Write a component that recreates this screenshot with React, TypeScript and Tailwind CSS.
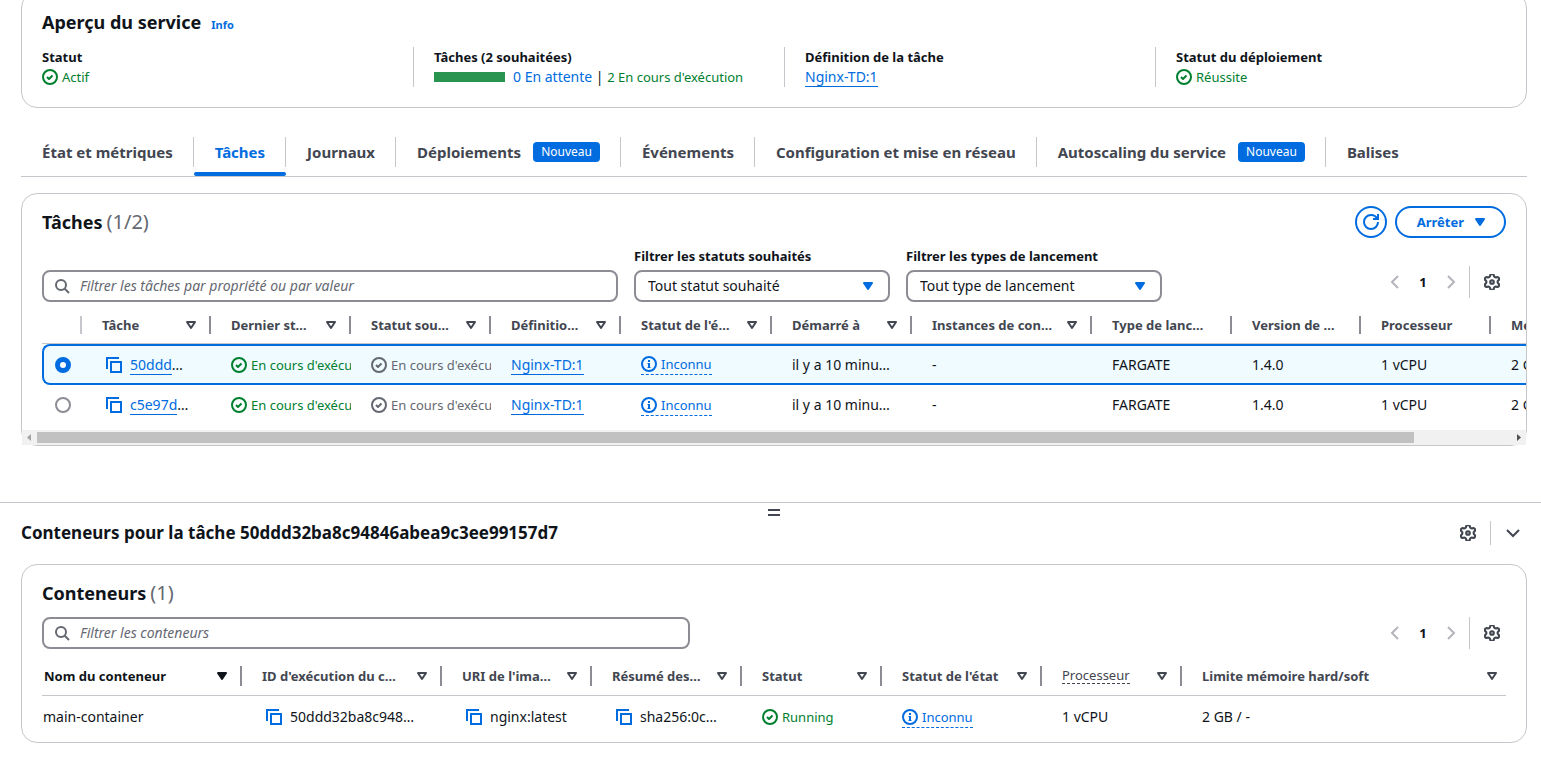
import { useState, type ReactNode } from "react";

type IconProps = { className?: string };

function CheckIcon({ className = "" }: IconProps) {
  return (
    <svg viewBox="0 0 16 16" className={`size-4 shrink-0 ${className}`} fill="none" stroke="currentColor" strokeWidth="2" aria-hidden="true">
      <circle cx="8" cy="8" r="7" />
      <path d="m5 8 2 2 3.521-3.521" strokeLinejoin="round" />
    </svg>
  );
}

function InfoIcon() {
  return (
    <svg viewBox="0 0 16 16" className="size-4 shrink-0" fill="none" stroke="currentColor" strokeWidth="2" aria-hidden="true">
      <circle cx="8" cy="8" r="7" />
      <path d="M8 12V7" />
      <path d="M6.5 7.5H8M6.5 11.500h3" strokeWidth="1" />
      <path d="M8 6V4" />
    </svg>
  );
}

function CopyIcon() {
  return (
    <svg viewBox="0 0 16 16" className="size-4 shrink-0" fill="none" stroke="currentColor" strokeWidth="2" aria-hidden="true">
      <path d="M15 5H5v10h10V5Z" />
      <path d="M13 1H1v11" />
    </svg>
  );
}

function SearchIcon() {
  return (
    <svg viewBox="0 0 16 16" className="size-4 shrink-0 text-[#656871]" fill="none" stroke="currentColor" strokeWidth="2" aria-hidden="true">
      <circle cx="7" cy="7" r="5" />
      <path d="m15 15-4.500-4.500" />
    </svg>
  );
}

function GearIcon() {
  return (
    <svg viewBox="2 2 20 20" className="size-4 shrink-0" fill="none" stroke="currentColor" strokeWidth="2.7" strokeLinejoin="round" aria-hidden="true">
      <path d="M9.671 4.136a2.34 2.34 0 0 1 4.659 0 2.34 2.34 0 0 0 3.319 1.915 2.34 2.34 0 0 1 2.33 4.033 2.34 2.34 0 0 0 0 3.831 2.34 2.34 0 0 1-2.33 4.033 2.34 2.34 0 0 0-3.319 1.915 2.34 2.34 0 0 1-4.659 0 2.34 2.34 0 0 0-3.32-1.915 2.34 2.34 0 0 1-2.33-4.033 2.34 2.34 0 0 0 0-3.831A2.34 2.34 0 0 1 6.35 6.051a2.34 2.34 0 0 0 3.319-1.915" />
      <circle cx="12" cy="12" r="2.2" />
    </svg>
  );
}

function RefreshIcon() {
  return (
    <svg viewBox="0 0 16 16" className="size-4 shrink-0" fill="none" stroke="currentColor" strokeWidth="2" aria-hidden="true">
      <path d="M10 5h5V0" />
      <path d="M15 8a6.957 6.957 0 0 1-7 7 6.957 6.957 0 0 1-7-7 6.957 6.957 0 0 1 7-7 6.87 6.87 0 0 1 6.3 4" />
    </svg>
  );
}

function Chevron({ d }: { d: string }) {
  return (
    <svg viewBox="0 0 16 16" className="size-4 shrink-0" fill="none" stroke="currentColor" strokeWidth="2" aria-hidden="true">
      <path d={d} />
    </svg>
  );
}

function Caret({ filled = false, className = "" }: { filled?: boolean; className?: string }) {
  return (
    <svg viewBox="0 0 16 16" className={`size-4 shrink-0 ${className}`} stroke="currentColor" strokeWidth="2" strokeLinejoin="round" fill={filled ? "currentColor" : "none"} aria-hidden="true">
      <path d="M4 5h8l-4 6-4-6Z" />
    </svg>
  );
}

function Info() {
  return (
    <span className="flex w-fit items-center gap-1 border-b border-dashed border-[#006ce0] text-[13px] text-[#006ce0]">
      <InfoIcon />
      Inconnu
    </span>
  );
}

function Link({ children }: { children: ReactNode }) {
  return (
    <a href="#" className="border-b border-[#006ce0] text-[#006ce0]">
      {children}
    </a>
  );
}

function Status({ color, children }: { color: string; children: ReactNode }) {
  return (
    <span className={`flex items-center gap-1 text-[13px] ${color}`}>
      <CheckIcon />
      {children}
    </span>
  );
}

const tabs = [
  { label: "État et métriques" },
  { label: "Tâches" },
  { label: "Journaux" },
  { label: "Déploiements", badge: true },
  { label: "Événements" },
  { label: "Configuration et mise en réseau" },
  { label: "Autoscaling du service", badge: true },
  { label: "Balises" },
];

function Pagination() {
  return (
    <div className="flex h-8 items-center">
      <nav aria-label="Pagination" className="flex items-center gap-3 pr-2.5">
        <button type="button" disabled aria-label="Page précédente" className="text-[#b4b4bb]">
          <Chevron d="M11 2 5 8l6 6" />
        </button>
        <button type="button" className="w-4 font-bold">
          1
        </button>
        <button type="button" disabled aria-label="Page suivante" className="text-[#b4b4bb]">
          <Chevron d="m5 2 6 6-6 6" />
        </button>
      </nav>
      <div className="flex h-8 items-center border-l border-[#c6c6cd] pr-1.5 pl-3.5">
        <button type="button" aria-label="Préférences" className="text-[#424650]">
          <GearIcon />
        </button>
      </div>
    </div>
  );
}

function SearchBox({ placeholder }: { placeholder: string }) {
  return (
    <label className="flex h-8 items-center gap-2.5 rounded-lg border-2 border-[#8c8c94] px-2.5">
      <SearchIcon />
      <input type="search" aria-label={placeholder} placeholder={placeholder} className="min-w-0 grow text-[14px] outline-none placeholder:text-[#656871] placeholder:italic" />
    </label>
  );
}

function FilterSelect({ id, label, value }: { id: string; label: string; value: string }) {
  return (
    <div className="flex w-64 flex-col gap-1">
      <label htmlFor={id} className="font-bold">
        {label}
      </label>
      <div className="relative">
        <select id={id} className="block h-8 w-full appearance-none rounded-lg border-2 border-[#8c8c94] bg-white px-3 text-[14px]">
          <option>{value}</option>
        </select>
        <Caret filled className="pointer-events-none absolute top-2 right-3.5 text-[#006ce0]" />
      </div>
    </div>
  );
}

type Column = { label: string; width: string; sort?: boolean };

const taskColumns: Column[] = [
  { label: "Tâche", width: "w-[129px]", sort: true },
  { label: "Dernier st…", width: "w-[140px]", sort: true },
  { label: "Statut sou…", width: "w-[140px]", sort: true },
  { label: "Définitio…", width: "w-[130px]", sort: true },
  { label: "Statut de l'é…", width: "w-[151px]", sort: true },
  { label: "Démarré à", width: "w-[140px]", sort: true },
  { label: "Instances de con…", width: "w-[180px]", sort: true },
  { label: "Type de lanc…", width: "w-[140px]" },
  { label: "Version de …", width: "w-[129px]" },
  { label: "Processeur", width: "w-[130px]" },
  { label: "Mémoire", width: "w-[120px]" },
];

const tasks = [{ id: "50ddd" }, { id: "c5e97d" }];

function TaskTable() {
  const [selected, setSelected] = useState(0);
  return (
    <table className="w-[1569px] table-fixed border-separate border-spacing-0 text-left whitespace-nowrap">
      <thead className="text-[#424650]">
        <tr className="h-[38px]">
          <th className="w-[40px] border-b border-[#c6c6cd] p-0">
            <div className="h-[18px] border-r-2 border-[#c6c6cd]" />
          </th>
          {taskColumns.map((c) => (
            <th key={c.label} className={`${c.width} border-b border-[#c6c6cd] p-0`}>
              <div className="flex h-[18px] items-center justify-between border-r-2 border-[#8c8c94] pr-2.5 pl-5">
                {c.label}
                {c.sort && <Caret />}
              </div>
            </th>
          ))}
        </tr>
      </thead>
      <tbody className="text-[14px]">
        {tasks.map((t, i) => {
          const on = i === selected;
          const cell = on
            ? "h-[41px] overflow-hidden border-y-2 border-[#006ce0] bg-[#f0fbff] p-0 pl-5"
            : "h-[40px] overflow-hidden p-0 pl-5";
          return (
            <tr key={t.id}>
              <td className={on ? "h-[41px] rounded-l-lg border-y-2 border-l-2 border-[#006ce0] bg-[#f0fbff] p-0 pl-[11px]" : "h-[40px] p-0 pl-[13px]"}>
                <input
                  type="radio"
                  name="task"
                  aria-label={`Tâche ${t.id}`}
                  checked={on}
                  onChange={() => setSelected(i)}
                  className="block size-4 appearance-none rounded-full border-2 border-[#8c8c94] bg-white checked:border-5 checked:border-[#006ce0]"
                />
              </td>
              <td className={cell}>
                <div className="flex items-center gap-2 pl-1">
                  <button type="button" aria-label="Copier" className="text-[#006ce0]">
                    <CopyIcon />
                  </button>
                  <span>
                    <Link>{t.id}</Link>…
                  </span>
                </div>
              </td>
              <td className={cell}>
                <Status color="text-[#00802f]">En cours d'exécution</Status>
              </td>
              <td className={cell}>
                <Status color="text-[#656871]">En cours d'exécution</Status>
              </td>
              <td className={cell}>
                <Link>Nginx-TD:1</Link>
              </td>
              <td className={cell}>
                <Info />
              </td>
              <td className={cell}>il y a 10 minu…</td>
              <td className={cell}>-</td>
              <td className={cell}>FARGATE</td>
              <td className={cell}>1.4.0</td>
              <td className={cell}>1 vCPU</td>
              <td className={cell}>2 GB</td>
            </tr>
          );
        })}
      </tbody>
    </table>
  );
}

const containerColumns: Column[] = [
  { label: "ID d'exécution du c…", width: "w-[200px]" },
  { label: "URI de l'ima…", width: "w-[150px]" },
  { label: "Résumé des…", width: "w-[150px]" },
  { label: "Statut", width: "w-[140px]" },
  { label: "Statut de l'état", width: "w-[160px]" },
];

function CopyCell({ children }: { children: ReactNode }) {
  return (
    <td className="p-0 pl-6">
      <div className="flex items-center gap-2">
        <button type="button" aria-label="Copier" className="text-[#006ce0]">
          <CopyIcon />
        </button>
        {children}
      </div>
    </td>
  );
}

function ContainerTable() {
  const head = "flex h-5 items-center justify-between border-r-2 border-[#8c8c94] pr-2.5";
  return (
    <table className="w-full table-fixed border-separate border-spacing-0 text-left whitespace-nowrap">
      <thead className="text-[#424650]">
        <tr className="h-10">
          <th className="w-[200px] border-b border-[#c6c6cd] p-0 text-[#0f141a]">
            <div className={`${head} pl-0.5`}>
              Nom du conteneur
              <Caret filled />
            </div>
          </th>
          {containerColumns.map((c) => (
            <th key={c.label} className={`${c.width} border-b border-[#c6c6cd] p-0`}>
              <div className={`${head} pl-5`}>
                {c.label}
                <Caret />
              </div>
            </th>
          ))}
          <th className="w-[140px] border-b border-[#c6c6cd] p-0 font-normal">
            <div className={`${head} pl-5`}>
              <span className="border-b border-dashed border-[#424650] leading-4">Processeur</span>
              <Caret />
            </div>
          </th>
          <th className="border-b border-[#c6c6cd] p-0">
            <div className="flex h-5 items-center justify-between pr-1.5 pl-5">
              Limite mémoire hard/soft
              <Caret />
            </div>
          </th>
        </tr>
      </thead>
      <tbody className="text-[14px]">
        <tr className="h-[42px]">
          <td className="p-0 pl-px">main-container</td>
          <CopyCell>50ddd32ba8c948…</CopyCell>
          <CopyCell>nginx:latest</CopyCell>
          <CopyCell>sha256:0c…</CopyCell>
          <td className="p-0 pl-5">
            <Status color="text-[#00802f]">Running</Status>
          </td>
          <td className="p-0 pl-5">
            <Info />
          </td>
          <td className="p-0 pl-5">1 vCPU</td>
          <td className="p-0 pl-5">2 GB / -</td>
        </tr>
      </tbody>
    </table>
  );
}

export default function App() {
  const item = "border-l border-[#c6c6cd] pl-5";
  return (
    <div className="overflow-hidden bg-white font-['Noto_Sans','Open_Sans',sans-serif] text-[13px] leading-5 text-[#0f141a]">
      <main className="pr-3.5 pl-[21px]">
        <section className="-mt-2 rounded-2xl border border-[#c6c6cd] px-5 pt-[17px] pb-5">
          <div className="flex items-baseline gap-2.5">
            <h2 className="text-[18px] leading-6 font-bold">Aperçu du service</h2>
            <a href="#" className="text-[11px] font-bold text-[#006ce0]">
              Info
            </a>
          </div>
          <dl className="mt-3 grid grid-cols-4 gap-5">
            <div>
              <dt className="font-bold">Statut</dt>
              <dd>
                <Status color="text-[#00802f]">Actif</Status>
              </dd>
            </div>
            <div className={item}>
              <dt className="font-bold">Tâches (2 souhaitées)</dt>
              <dd className="flex items-center text-[14px] whitespace-pre">
                <span className="mr-2 h-2.5 w-[71px] bg-[#29944f]" />
                <span className="text-[#006ce0]">0 En attente</span>
                <span> | </span>
                <span className="text-[13px] text-[#00802f]">2 En cours d'exécution</span>
              </dd>
            </div>
            <div className={item}>
              <dt className="font-bold">Définition de la tâche</dt>
              <dd className="text-[14px]">
                <Link>Nginx-TD:1</Link>
              </dd>
            </div>
            <div className={item}>
              <dt className="font-bold">Statut du déploiement</dt>
              <dd>
                <Status color="text-[#00802f]">Réussite</Status>
              </dd>
            </div>
          </dl>
        </section>

        <div role="tablist" className="mt-[21px] flex border-b border-[#c6c6cd] text-[15px] font-bold text-[#424650]">
          {tabs.map((t, i) => (
            <button
              key={t.label}
              type="button"
              role="tab"
              aria-selected={i === 1}
              className={i === 1 ? "flex flex-col pt-2 text-[#006ce0]" : "flex flex-col pt-2"}
            >
              <span className={`flex h-[30px] items-center gap-3 pr-5 pl-[21px] ${i < tabs.length - 1 ? "border-r border-[#c6c6cd]" : ""}`}>
                {t.label}
                {t.badge && <span className="rounded bg-[#006ce0] px-2 text-[12px] leading-5 font-normal text-white">Nouveau</span>}
              </span>
              <span className={`mt-[5px] h-1 self-stretch rounded-xs ${i === 1 ? "bg-[#006ce0]" : ""}`} />
            </button>
          ))}
        </div>

        <section className="mt-4 rounded-2xl border border-[#c6c6cd]">
          <div className="px-5 pt-3">
            <div className="flex h-8 items-center justify-between">
              <h2 className="flex items-baseline gap-1 text-[18px] font-bold">
                Tâches <span className="text-[20px] font-normal text-[#656871]">(1/2)</span>
              </h2>
              <div className="flex gap-2 text-[#006ce0]">
                <button type="button" aria-label="Actualiser" className="flex size-8 items-center justify-center rounded-full border-2 border-[#006ce0]">
                  <RefreshIcon />
                </button>
                <button type="button" className="flex h-8 items-center gap-2 rounded-full border-2 border-[#006ce0] pr-4 pl-5 font-bold">
                  Arrêter
                  <Caret filled />
                </button>
              </div>
            </div>
            <div className="mt-2 flex items-end gap-4">
              <div className="w-[576px]">
                <SearchBox placeholder="Filtrer les tâches par propriété ou par valeur" />
              </div>
              <FilterSelect id="status" label="Filtrer les statuts souhaités" value="Tout statut souhaité" />
              <FilterSelect id="launch" label="Filtrer les types de lancement" value="Tout type de lancement" />
              <div className="mb-1 ml-auto">
                <Pagination />
              </div>
            </div>
          </div>
          <div className="mt-1 overflow-hidden pb-[5px] pl-5">
            <TaskTable />
          </div>
          <div className="flex h-[15px] items-center bg-[#f1f1f1]">
            <svg viewBox="0 0 15 15" className="size-[15px] shrink-0 fill-[#a3a3a3]" aria-hidden="true">
              <path d="M9 4v7L5 7.500z" />
            </svg>
            <div className="h-[11px] grow-[1378] bg-[#c1c1c1]" />
            <div className="grow-[97]" />
            <svg viewBox="0 0 15 15" className="size-[15px] shrink-0 fill-[#505050]" aria-hidden="true">
              <path d="M6 4v7l4-3.500z" />
            </svg>
          </div>
        </section>
      </main>

      <aside className="mt-14 border-t border-[#c6c6cd] pt-1.5 pr-3.5 pb-7 pl-[21px]">
        <button type="button" aria-label="Redimensionner le panneau" className="mx-auto block h-[7px] w-3 border-y-2 border-[#424650]" />
        <div className="mt-[5px] mb-[19px] flex h-6 items-center justify-between">
          <h2 className="text-[17px] font-bold">Conteneurs pour la tâche 50ddd32ba8c94846abea9c3ee99157d7</h2>
          <div className="flex items-center text-[#424650]">
            <button type="button" aria-label="Préférences" className="mr-3.5">
              <GearIcon />
            </button>
            <div className="h-6 border-l border-[#c6c6cd] pl-3.5" />
            <button type="button" aria-label="Réduire" className="mr-1.5">
              <Chevron d="m2 5 6 6 6-6" />
            </button>
          </div>
        </div>
        <section className="rounded-2xl border border-[#c6c6cd] px-5 pt-3 pb-1">
          <div className="flex h-8 items-center">
            <h2 className="flex items-baseline gap-1 text-[18px] font-bold">
              Conteneurs <span className="text-[20px] font-normal text-[#656871]">(1)</span>
            </h2>
          </div>
          <div className="mt-2 flex items-center justify-between">
            <div className="w-[648px]">
              <SearchBox placeholder="Filtrer les conteneurs" />
            </div>
            <Pagination />
          </div>
          <div className="mt-[7px]">
            <ContainerTable />
          </div>
        </section>
      </aside>
    </div>
  );
}
